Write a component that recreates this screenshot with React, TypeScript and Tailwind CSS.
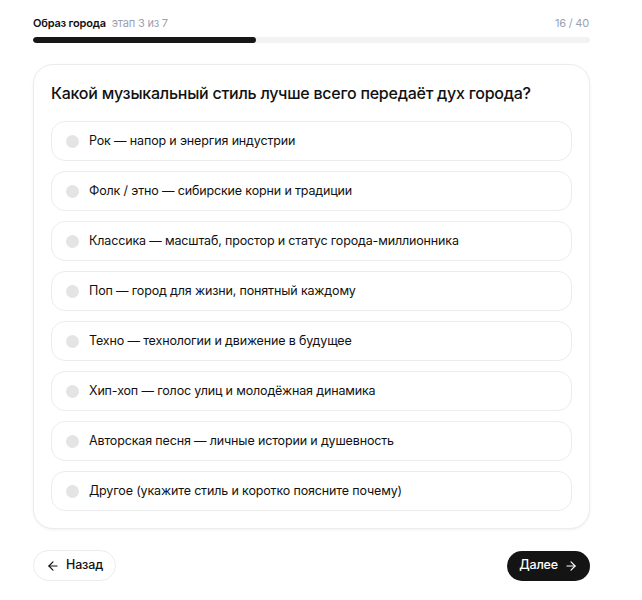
import { ArrowLeft, ArrowRight } from "lucide-react";

const options = [
  "Рок — напор и энергия индустрии",
  "Фолк / этно — сибирские корни и традиции",
  "Классика — масштаб, простор и статус города-миллионника",
  "Поп — город для жизни, понятный каждому",
  "Техно — технологии и движение в будущее",
  "Хип-хоп — голос улиц и молодёжная динамика",
  "Авторская песня — личные истории и душевность",
  "Другое (укажите стиль и коротко поясните почему)",
];

export default function App() {
  return (
    <div
      className="min-h-screen bg-white pl-[33px] pt-[15px] text-[#111]"
      style={{ fontFamily: "Inter, 'Noto Sans', sans-serif" }}
    >
      <div className="w-[557px]">
        {/* HEADER */}
        <div className="flex items-center justify-between text-[11px] leading-[16px] tracking-[-0.2px]">
          <div className="flex items-center gap-[6px]">
            <span className="font-semibold">Образ города</span>
            <span className="text-gray-400">этап 3 из 7</span>
          </div>
          <span className="pr-[1px] text-gray-400">16 / 40</span>
        </div>

        <div className="mt-[6px] h-[6px] w-full overflow-hidden rounded-full bg-[#f3f3f3]">
          <div className="h-full w-[40%] rounded-full bg-[#171717]"></div>
        </div>

        {/* CARD */}
        <div className="mt-[21px] rounded-[20px] border border-[#ececec] bg-white px-[17px] pb-[17px] pt-[17px] shadow-[0_1px_3px_rgba(0,0,0,0.06)]">
          <h1 className="text-[16px] font-medium leading-[22px] tracking-[-0.25px]">
            Какой музыкальный стиль лучше всего передаёт дух города?
          </h1>

          <div className="mt-[17px] flex flex-col gap-[10px]">
            {options.map((opt) => (
              <button
                key={opt}
                type="button"
                className="flex h-[40px] items-center gap-[10px] rounded-[14px] border border-[#ececec] bg-white px-[14px] text-left text-[12.5px] tracking-[-0.15px]"
              >
                <span className="h-[13px] w-[13px] shrink-0 rounded-full bg-[#e4e4e4]"></span>
                <span>{opt}</span>
              </button>
            ))}
          </div>
        </div>

        {/* NAV */}
        <div className="mt-[21px] flex items-center justify-between">
          <button
            type="button"
            className="flex h-[31px] items-center gap-[6px] rounded-full border border-[#ececec] bg-white px-[12px] text-[12.5px] font-medium tracking-[-0.15px]"
          >
            <ArrowLeft size={14} strokeWidth={2} />
            Назад
          </button>
          <button
            type="button"
            className="flex h-[30px] items-center gap-[6px] rounded-full bg-[#141414] px-[12px] text-[12.5px] font-medium tracking-[-0.15px] text-white"
          >
            Далее
            <ArrowRight size={14} strokeWidth={2} />
          </button>
        </div>
      </div>
    </div>
  );
}
